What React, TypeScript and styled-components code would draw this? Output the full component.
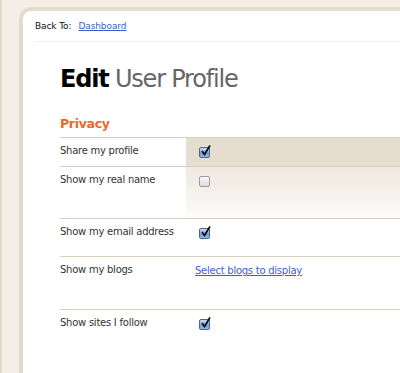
import React from 'react';
import styled, { createGlobalStyle } from 'styled-components';

const GlobalStyle = createGlobalStyle`
  html, body {
    margin: 0;
    padding: 0;
    background: #f4efe6;
    overflow: hidden;
  }
  body {
    font-family: "DejaVu Sans", Verdana, sans-serif;
  }
`;

const Page = styled.div`
  height: 373px;
  border-left: 2px solid #e2dacb;
  padding: 7px 0 0 17px;
  box-sizing: border-box;
`;

const Panel = styled.div`
  background: #fff;
  border-top: 4px solid #e4dccb;
  border-left: 4px solid #e4dccb;
  border-top-left-radius: 12px;
  height: 100%;
`;

const TopBar = styled.div`
  display: flex;
  align-items: center;
  gap: 7px;
  height: 30px;
  margin-left: 12px;
  border-bottom: 1px solid #f1eee9;
  font-size: 9px;
  letter-spacing: -0.1px;
  color: #111;
`;

const Link = styled.a<{ $size?: number }>`
  color: #3a5fcd;
  text-decoration: underline;
  cursor: pointer;
  font-size: ${(p) => p.$size ?? 9}px;
`;

const Content = styled.div`
  padding-left: 37px;
`;

const Heading = styled.h1`
  margin: 21px 0 0;
  font-size: 24px;
  font-weight: normal;
  line-height: 32px;
  color: #666;
  letter-spacing: -1.2px;
`;

const Strong = styled.span`
  font-weight: bold;
  color: #000;
`;

const Section = styled.h2`
  margin: 20px 0 0;
  font-size: 12.5px;
  line-height: 18px;
  font-weight: bold;
  color: #e8692b;
  letter-spacing: -0.3px;
`;

const Table = styled.div`
  margin-top: 4px;
  display: grid;
  grid-template-columns: 126px 1fr;
  font-size: 10px;
  line-height: 12px;
  letter-spacing: -0.25px;
`;

const Label = styled.div<{ $h: number }>`
  height: ${(p) => p.$h}px;
  border-top: 1px solid #d8cfc1;
  box-sizing: border-box;
  padding-top: 7px;
  color: #333;
`;

const Cell = styled.div<{ $h: number; $bg?: 'solid' | 'fade'; $link?: boolean }>`
  height: ${(p) => p.$h}px;
  border-top: 1px solid #d8cfc1;
  box-sizing: border-box;
  padding: 8px 0 0 ${(p) => (p.$link ? 9 : 13)}px;
  background: ${(p) =>
    p.$bg === 'solid'
      ? '#e5ddd0'
      : p.$bg === 'fade'
      ? 'linear-gradient(#eee8de, #fbfaf8 90%, #fff)'
      : 'transparent'};
`;

const Box = styled.span<{ $on?: boolean }>`
  position: relative;
  display: inline-block;
  width: 9px;
  height: 9px;
  margin-top: 1px;
  border: 1px solid ${(p) => (p.$on ? '#55677f' : '#9a9a9a')};
  border-radius: 2px;
  background: ${(p) =>
    p.$on ? 'linear-gradient(#c9defa, #6b9ee0 60%, #8fb8ee)' : 'linear-gradient(#fbfbfb, #dcdcdc)'};
`;

const Tick = styled.svg`
  position: absolute;
  left: 1px;
  top: -3px;
`;

const Check = ({ on }: { on?: boolean }) => (
  <Box $on={on}>
    {on && (
      <Tick width="10" height="11" viewBox="0 0 10 11">
        <path d="M1 6 L3.5 9.5 L9 0.5" fill="none" stroke="#000" strokeWidth="1.6" />
      </Tick>
    )}
  </Box>
);

export default function App() {
  return (
    <>
      <GlobalStyle />
      <Page>
        <Panel>
          <TopBar>
            <span>Back To:</span>
            <Link>Dashboard</Link>
          </TopBar>
          <Content>
            <Heading>
              <Strong>Edit</Strong> User Profile
            </Heading>
            <Section>Privacy</Section>
            <Table>
              <Label $h={29}>Share my profile</Label>
              <Cell $h={29} $bg="solid">
                <Check on />
              </Cell>
              <Label $h={52}>Show my real name</Label>
              <Cell $h={52} $bg="fade">
                <Check />
              </Cell>
              <Label $h={38}>Show my email address</Label>
              <Cell $h={38}>
                <Check on />
              </Cell>
              <Label $h={53}>Show my blogs</Label>
              <Cell $h={53} $link>
                <Link $size={10}>Select blogs to display</Link>
              </Cell>
              <Label $h={50}>Show sites I follow</Label>
              <Cell $h={50}>
                <Check on />
              </Cell>
            </Table>
          </Content>
        </Panel>
      </Page>
    </>
  );
}
